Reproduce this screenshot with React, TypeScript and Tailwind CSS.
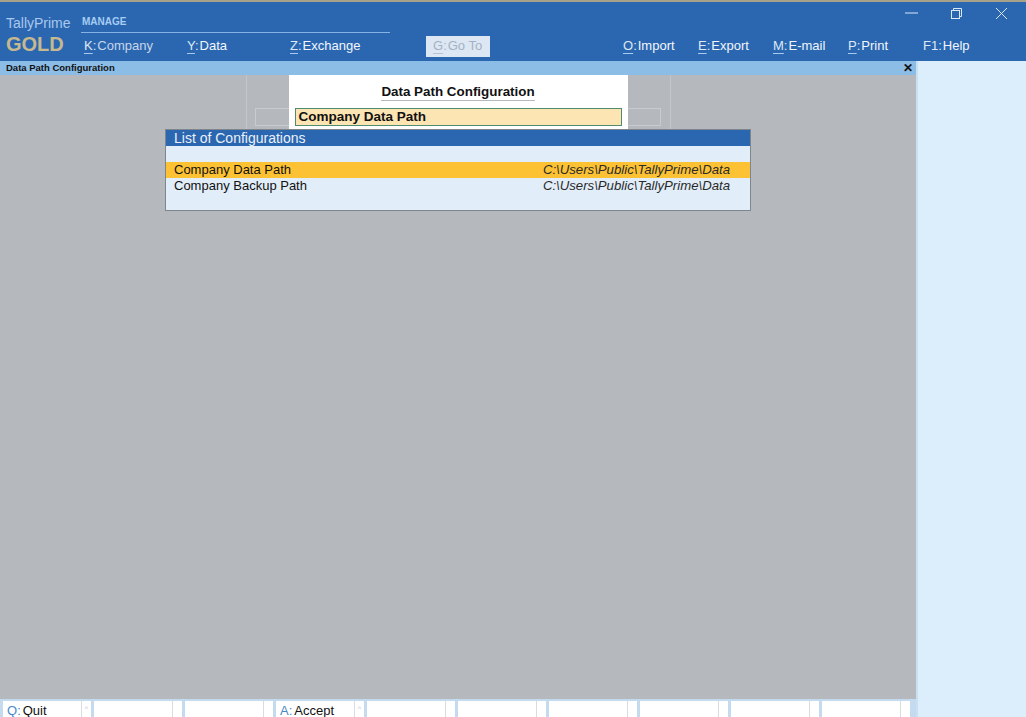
import { ReactNode } from "react";

const font = "font-['Liberation_Sans',Arial,sans-serif]";

type MenuItem = { hotkey: string; label: string; width: string; dim?: boolean };

const leftMenu: MenuItem[] = [
  { hotkey: "K", label: "Company", width: "w-[103px]", dim: true },
  { hotkey: "Y", label: "Data", width: "w-[103px]" },
  { hotkey: "Z", label: "Exchange", width: "w-[136px]" },
];

const rightMenu: MenuItem[] = [
  { hotkey: "O", label: "Import", width: "w-[75px]" },
  { hotkey: "E", label: "Export", width: "w-[75px]" },
  { hotkey: "M", label: "E-mail", width: "w-[75px]" },
  { hotkey: "P", label: "Print", width: "w-[75px]" },
  { hotkey: "F1", label: "Help", width: "w-[75px]" },
];

const bottomButtons = [
  { hotkey: "Q", label: "Quit", arrow: true },
  { hotkey: "", label: "" },
  { hotkey: "", label: "" },
  { hotkey: "A", label: "Accept", arrow: true },
  { hotkey: "", label: "" },
  { hotkey: "", label: "" },
  { hotkey: "", label: "" },
  { hotkey: "", label: "" },
  { hotkey: "", label: "" },
  { hotkey: "", label: "" },
];

const configs = [
  { name: "Company Data Path", path: "C:\\Users\\Public\\TallyPrime\\Data", selected: true },
  { name: "Company Backup Path", path: "C:\\Users\\Public\\TallyPrime\\Data" },
];

const MenuLink = ({ item }: { item: MenuItem }) => {
  const noUnderline = item.hotkey === "F1";
  return (
    <div className={`${item.width} text-[13px] leading-[16px] whitespace-nowrap`}>
      <span
        className={
          noUnderline
            ? "text-[#dfe9f6]"
            : "text-[#dfe9f6] underline decoration-[#a9c9ee] underline-offset-[3px]"
        }
      >
        {item.hotkey}
      </span>
      <span className="text-[#dfe9f6] mr-[1px]">:</span>
      <span className={item.dim ? "text-[#c7d6ea]" : "text-[#f2f6fb]"}>{item.label}</span>
    </div>
  );
};

const WinButton = ({ children }: { children: ReactNode }) => {
  return <div className="w-[45px] h-[22px] flex items-center justify-center">{children}</div>;
};

const Header = () => {
  return (
    <header className="h-[59px] bg-[#2b67b1] flex">
      <div className="w-[81px] pl-[6px] pt-[13px] flex flex-col gap-[2px]">
        <span className="text-[14px] leading-[16px] text-[#a9c8ec]">TallyPrime</span>
        <span className="text-[20px] leading-[22px] font-bold text-[#c6b88f]">GOLD</span>
      </div>
      <div className="flex-1 flex flex-col">
        <div className="h-[31px] flex">
          <div className="w-[309px] border-b border-[#86b2e4] pt-[14px] pl-[1px]">
            <span className="text-[10px] leading-[12px] font-bold text-[#a6cdf2] block">MANAGE</span>
          </div>
          <div className="flex-1 flex justify-end pr-[2px]">
            <WinButton>
              <svg width="13" height="2" viewBox="0 0 13 2">
                <line x1="0" y1="1" x2="13" y2="1" stroke="#dbe8f6" strokeWidth="1" />
              </svg>
            </WinButton>
            <WinButton>
              <svg width="11" height="11" viewBox="0 0 11 11" fill="none" stroke="#dbe8f6" strokeWidth="1">
                <rect x="0.5" y="2.5" width="8" height="8" />
                <path d="M2.5 2.5V0.5H10.5V8.5H8.5" />
              </svg>
            </WinButton>
            <WinButton>
              <svg width="11" height="11" viewBox="0 0 11 11" stroke="#dbe8f6" strokeWidth="1">
                <path d="M0 0L11 11M11 0L0 11" />
              </svg>
            </WinButton>
          </div>
        </div>
        <div className="h-[26px] flex items-center pl-[3px]">
          {leftMenu.map((m) => (
            <MenuLink key={m.hotkey} item={m} />
          ))}
          <div className="w-[64px] h-[21px] bg-[#dce7f3] flex items-center pl-[7px] text-[13px] text-[#a3b2c3] whitespace-nowrap">
            <span className="underline decoration-[#b5c3d2] underline-offset-[3px]">G</span>
            <span className="mr-[1px]">:</span>Go To
          </div>
          <div className="w-[133px]" />
          {rightMenu.map((m) => (
            <MenuLink key={m.hotkey} item={m} />
          ))}
        </div>
      </div>
    </header>
  );
};

const ConfigDialog = () => {
  return (
    <div className="grid w-[425px] h-[54px] mx-auto">
      {/* faint form sitting behind the active dialog */}
      <div className="col-start-1 row-start-1 border-x border-[#c3c7cb] pt-[33px] pl-[8px] pr-[9px]">
        <div className="h-[18px] border border-[#c8ccd0]" />
      </div>
      <div className="col-start-1 row-start-1 w-[339px] h-[54px] mx-auto bg-white flex flex-col items-center">
        <div className="mt-[9px] text-[13.4px] leading-[15px] font-bold text-[#111] border-b border-[#b3bac2] pb-[1px]">
          Data Path Configuration
        </div>
        <div className="mt-[7px] w-[327px] h-[18px] bg-[#fce4b3] border border-[#4f8c70] pl-[3px] text-[13.5px] leading-[16px] font-bold text-[#111]">
          Company Data Path
        </div>
      </div>
    </div>
  );
};

const ConfigList = () => {
  return (
    <div className="absolute top-[54px] left-1/2 -translate-x-1/2 w-[586px] border border-[#7d858d] bg-[#e1eef9]">
      <div className="h-[16px] bg-[#2b66b0] pl-[8px] text-[14px] leading-[16px] text-[#eaf1f9]">
        List of Configurations
      </div>
      <div className="h-[16px]" />
      {configs.map((c) => (
        <div
          key={c.name}
          className={`h-[16px] flex justify-between items-center pl-[8px] pr-[20px] text-[13px] leading-[16px] ${
            c.selected ? "bg-[#fdc233]" : ""
          }`}
        >
          <span className="text-[#111]">{c.name}</span>
          <span className="italic text-[13.2px] text-[#2a2a2a]">{c.path}</span>
        </div>
      ))}
      <div className="h-[16px]" />
    </div>
  );
};

const BottomBar = () => {
  return (
    <div className="h-[18px] bg-[#c4dbef] flex gap-[3px] pl-[3px] pt-[2px] overflow-hidden">
      {bottomButtons.map((b, i) => (
        <div key={i} className="w-[88px] h-[16px] bg-white flex">
          <div className="w-[79px] border-r border-[#d8dde2] pl-[4px] pt-[3px] text-[13px] leading-[13px] whitespace-nowrap">
            {b.hotkey && (
              <>
                <span className="text-[#4a88c9]">{b.hotkey}</span>
                <span className="text-[#4a88c9]">:</span>
                <span className="text-[#111] ml-[2px]">{b.label}</span>
              </>
            )}
          </div>
          <div className="flex-1 flex justify-center pt-[4px] text-[7px] leading-[8px] text-[#c0c5ca]">
            {b.arrow ? "^" : ""}
          </div>
        </div>
      ))}
    </div>
  );
};

const App = () => {
  return (
    <div className={`${font} w-[1026px] h-[717px] overflow-hidden flex flex-col bg-[#2b67b1]`}>
      <div className="h-[2px] bg-[#a9a28b]" />
      <Header />
      <div className="flex-1 flex">
        <div className="w-[916px] flex flex-col">
          <div className="h-[14px] bg-[#8cbde7] flex items-center justify-between pl-[6px] pr-[3px]">
            <span className="text-[9.5px] leading-[12px] font-bold text-[#111]">Data Path Configuration</span>
            <span className="text-[12px] leading-[12px] font-bold text-[#111]">✕</span>
          </div>
          <main className="flex-1 bg-[#b5b9bd] relative">
            <ConfigDialog />
            <ConfigList />
          </main>
          <BottomBar />
        </div>
        <aside className="flex-1 bg-[#dcedfb] border-l-2 border-[#c9dff2]" />
      </div>
    </div>
  );
};

export default App;
